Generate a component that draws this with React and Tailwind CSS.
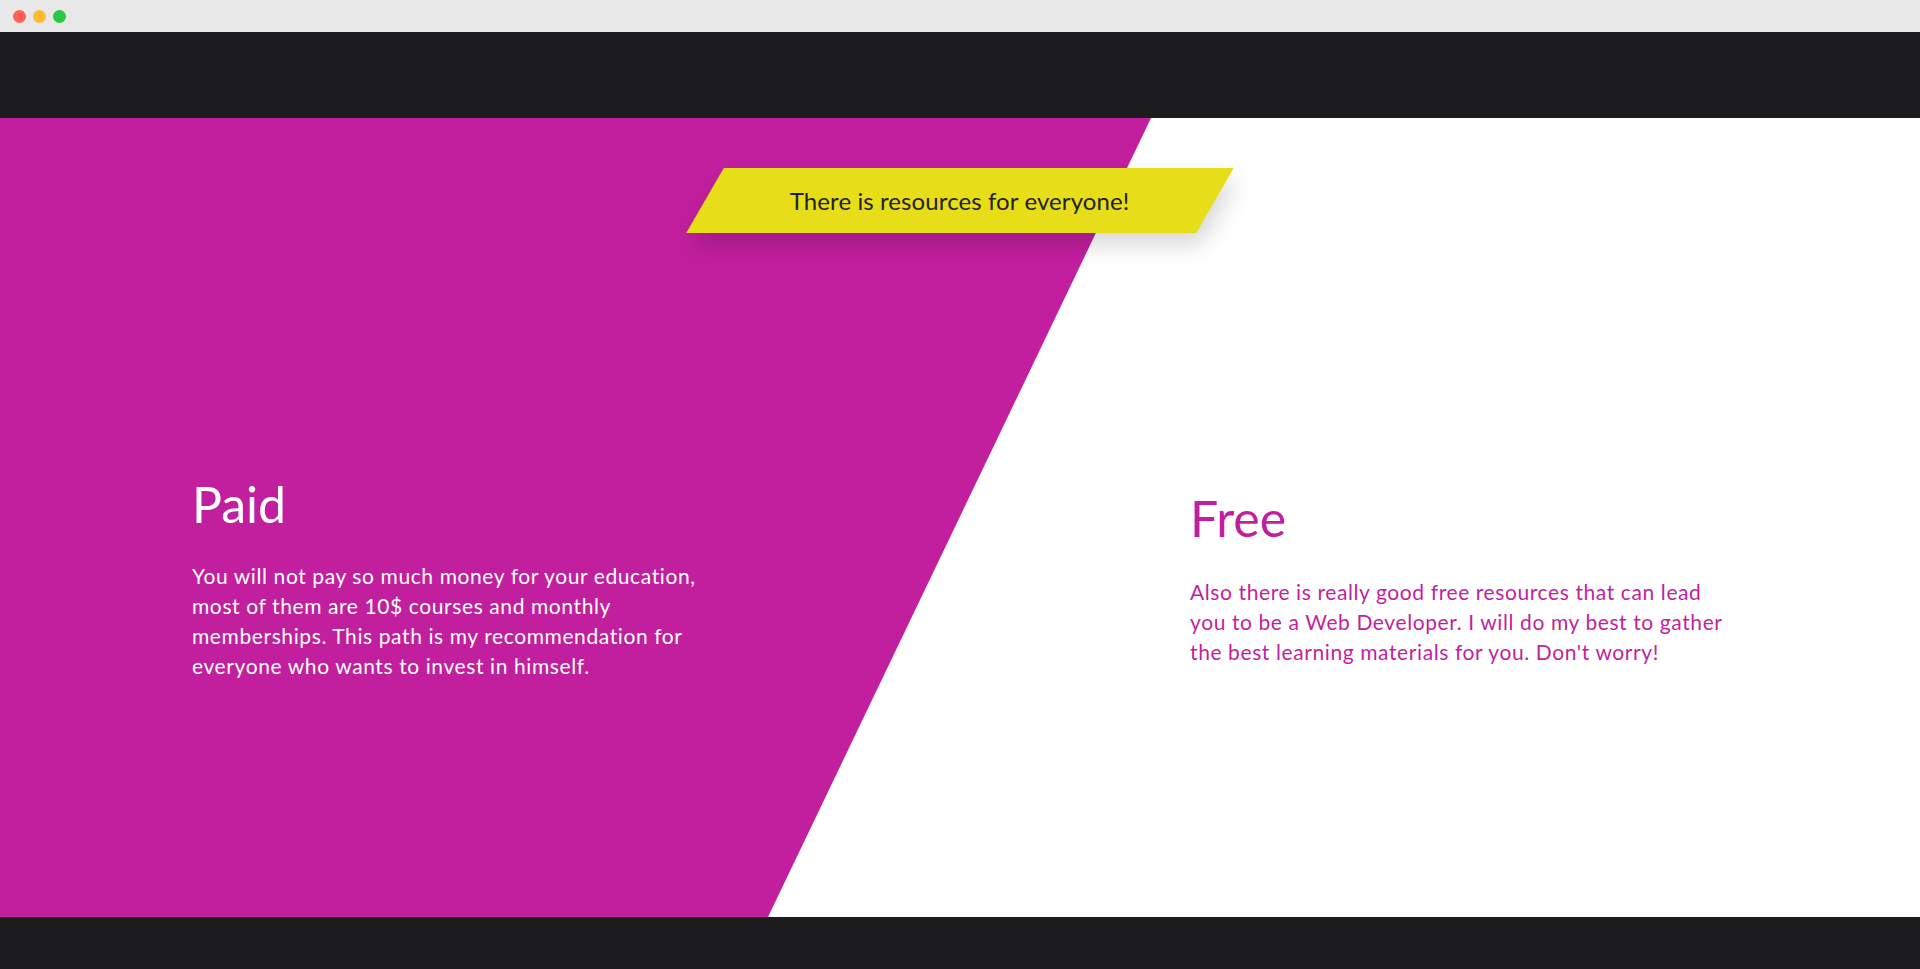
export default function App() {
  return (
    <div className="w-[1920px] h-[969px] flex flex-col overflow-hidden bg-white font-['Lato',sans-serif]">
      <div className="h-[32px] shrink-0 bg-[#e8e8e8] flex items-center gap-[7px] pl-[13px]">
        <span className="w-[13px] h-[13px] rounded-full bg-[#fe5f57]" />
        <span className="w-[13px] h-[13px] rounded-full bg-[#febc2e]" />
        <span className="w-[13px] h-[13px] rounded-full bg-[#28c840]" />
      </div>
      <header className="h-[86px] shrink-0 bg-[#1c1c1e]" />
      <section className="relative flex-1 flex flex-col">
        <div className="absolute inset-0 bg-[#c11f9e] [clip-path:polygon(0_0,1151px_0,768px_100%,0_100%)]" />
        <div className="relative mt-[50px] self-center w-[510px] h-[65px] -skew-x-[30deg] bg-[#e7de19] shadow-[10px_12px_22px_rgba(0,0,0,0.16)] flex items-center justify-center">
          <p className="skew-x-[30deg] text-[24px] tracking-[0.1px] text-[#222222]">There is resources for everyone!</p>
        </div>
        <div className="relative flex-1 flex items-center pt-[5px]">
          <div className="w-[998px] pl-[192px] text-white">
            <h2 className="text-[50px] leading-[1.2] mb-[27px]">Paid</h2>
            <p className="text-[21px] leading-[30px] tracking-[0.6px] whitespace-nowrap">
              You will not pay so much money for your education,<br />
              most of them are 10$ courses and monthly<br />
              memberships. This path is my recommendation for<br />
              everyone who wants to invest in himself.
            </p>
          </div>
          <div className="pl-[192px] text-[#c11f9e]">
            <h2 className="text-[50px] leading-[1.2] mb-[29px]">Free</h2>
            <p className="text-[21px] leading-[30px] tracking-[0.6px] whitespace-nowrap">
              Also there is really good free resources that can lead<br />
              you to be a Web Developer. I will do my best to gather<br />
              the best learning materials for you. Don't worry!
            </p>
          </div>
        </div>
      </section>
      <footer className="h-[52px] shrink-0 bg-[#1c1c1e]" />
    </div>
  );
}
